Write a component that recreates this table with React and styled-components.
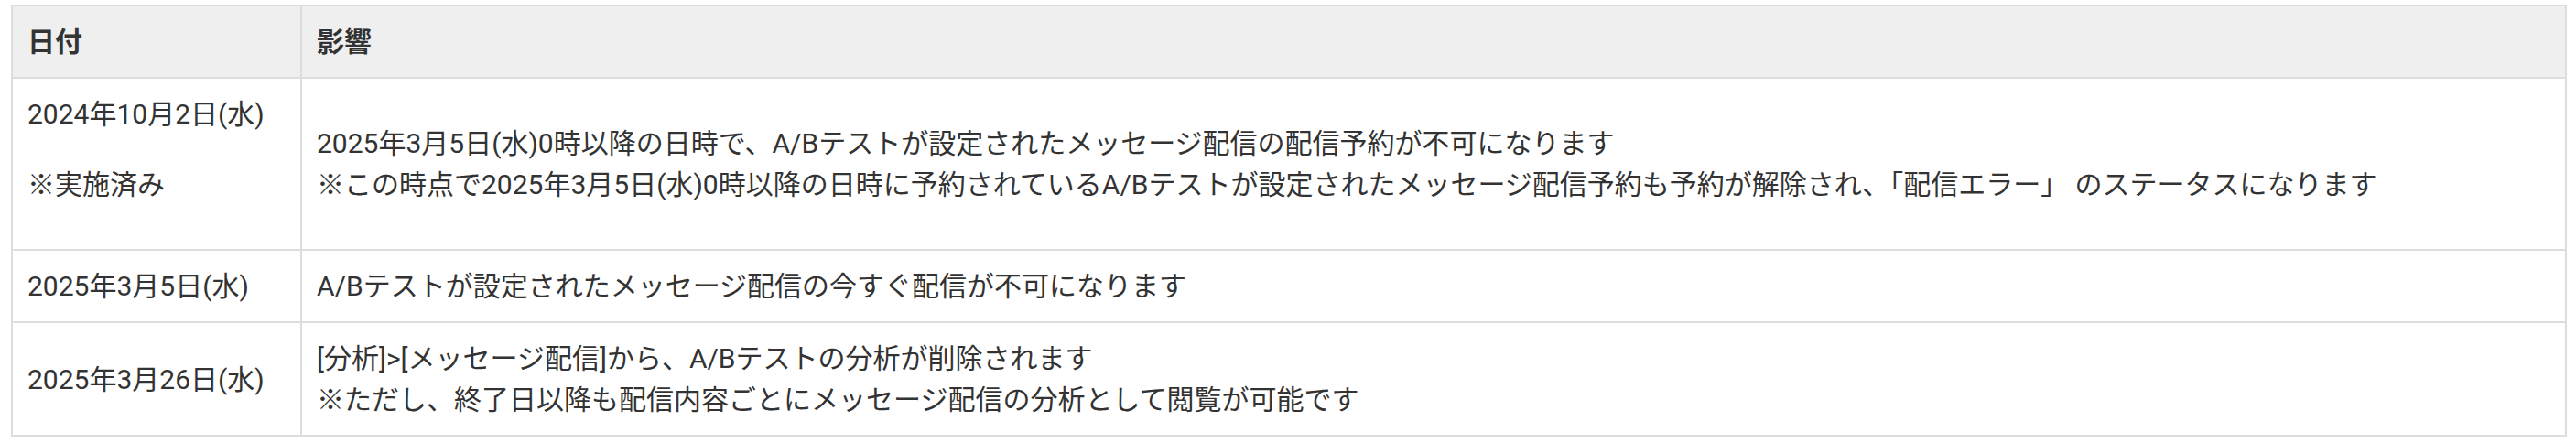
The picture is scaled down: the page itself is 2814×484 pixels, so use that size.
import React from "react";
import styled, { createGlobalStyle } from "styled-components";

const GlobalStyle = createGlobalStyle`
  html, body {
    margin: 0;
    padding: 0;
    background: #ffffff;
  }
  body {
    font-family: Roboto, "Noto Sans CJK JP", sans-serif;
    color: #333333;
  }
`;

const rows = [
  {
    date: ["2024年10月2日(水)", "※実施済み"],
    effect: [
      "2025年3月5日(水)0時以降の日時で、A/Bテストが設定されたメッセージ配信の配信予約が不可になります",
      "※この時点で2025年3月5日(水)0時以降の日時に予約されているA/Bテストが設定されたメッセージ配信予約も予約が解除され、「配信エラー」 のステータスになります",
    ],
  },
  {
    date: ["2025年3月5日(水)"],
    effect: ["A/Bテストが設定されたメッセージ配信の今すぐ配信が不可になります"],
  },
  {
    date: ["2025年3月26日(水)"],
    effect: [
      "[分析]>[メッセージ配信]から、A/Bテストの分析が削除されます",
      "※ただし、終了日以降も配信内容ごとにメッセージ配信の分析として閲覧が可能です",
    ],
  },
];

function App() {
  return (
    <>
      <GlobalStyle />
      <Page>
        <Table>
          <colgroup>
            <col style={{ width: "316px" }} />
            <col />
          </colgroup>
          <thead>
            <tr>
              <HeadCell>日付</HeadCell>
              <HeadCell>影響</HeadCell>
            </tr>
          </thead>
          <tbody>
            {rows.map((row, i) => (
              <tr key={i}>
                <Cell>
                  {row.date.length > 1
                    ? row.date.map((d, j) => <DateLine key={j}>{d}</DateLine>)
                    : row.date[0]}
                </Cell>
                <Cell>
                  {row.effect.map((line, j) => (
                    <Line key={j}>{line}</Line>
                  ))}
                </Cell>
              </tr>
            ))}
          </tbody>
        </Table>
      </Page>
    </>
  );
}

const Page = styled.div`
  padding: 5px 10px 8px 12px;
`;

const Table = styled.table`
  width: 100%;
  table-layout: fixed;
  border-collapse: separate;
  border-spacing: 0;
  border-top: 2px solid #dddddd;
  border-left: 2px solid #dddddd;
  font-size: 30px;
  line-height: 45px;
`;

const HeadCell = styled.th`
  box-sizing: border-box;
  padding: 16px 16px;
  text-align: left;
  font-weight: 700;
  background-color: #efefef;
  border-right: 2px solid #dddddd;
  border-bottom: 2px solid #dddddd;
  white-space: nowrap;
`;

const Cell = styled.td`
  box-sizing: border-box;
  padding: 16px 16px;
  vertical-align: middle;
  border-right: 2px solid #dddddd;
  border-bottom: 2px solid #dddddd;
  white-space: pre;
`;

const DateLine = styled.p`
  margin: 0 0 32px;
`;

const Line = styled.div``;

export default App;
